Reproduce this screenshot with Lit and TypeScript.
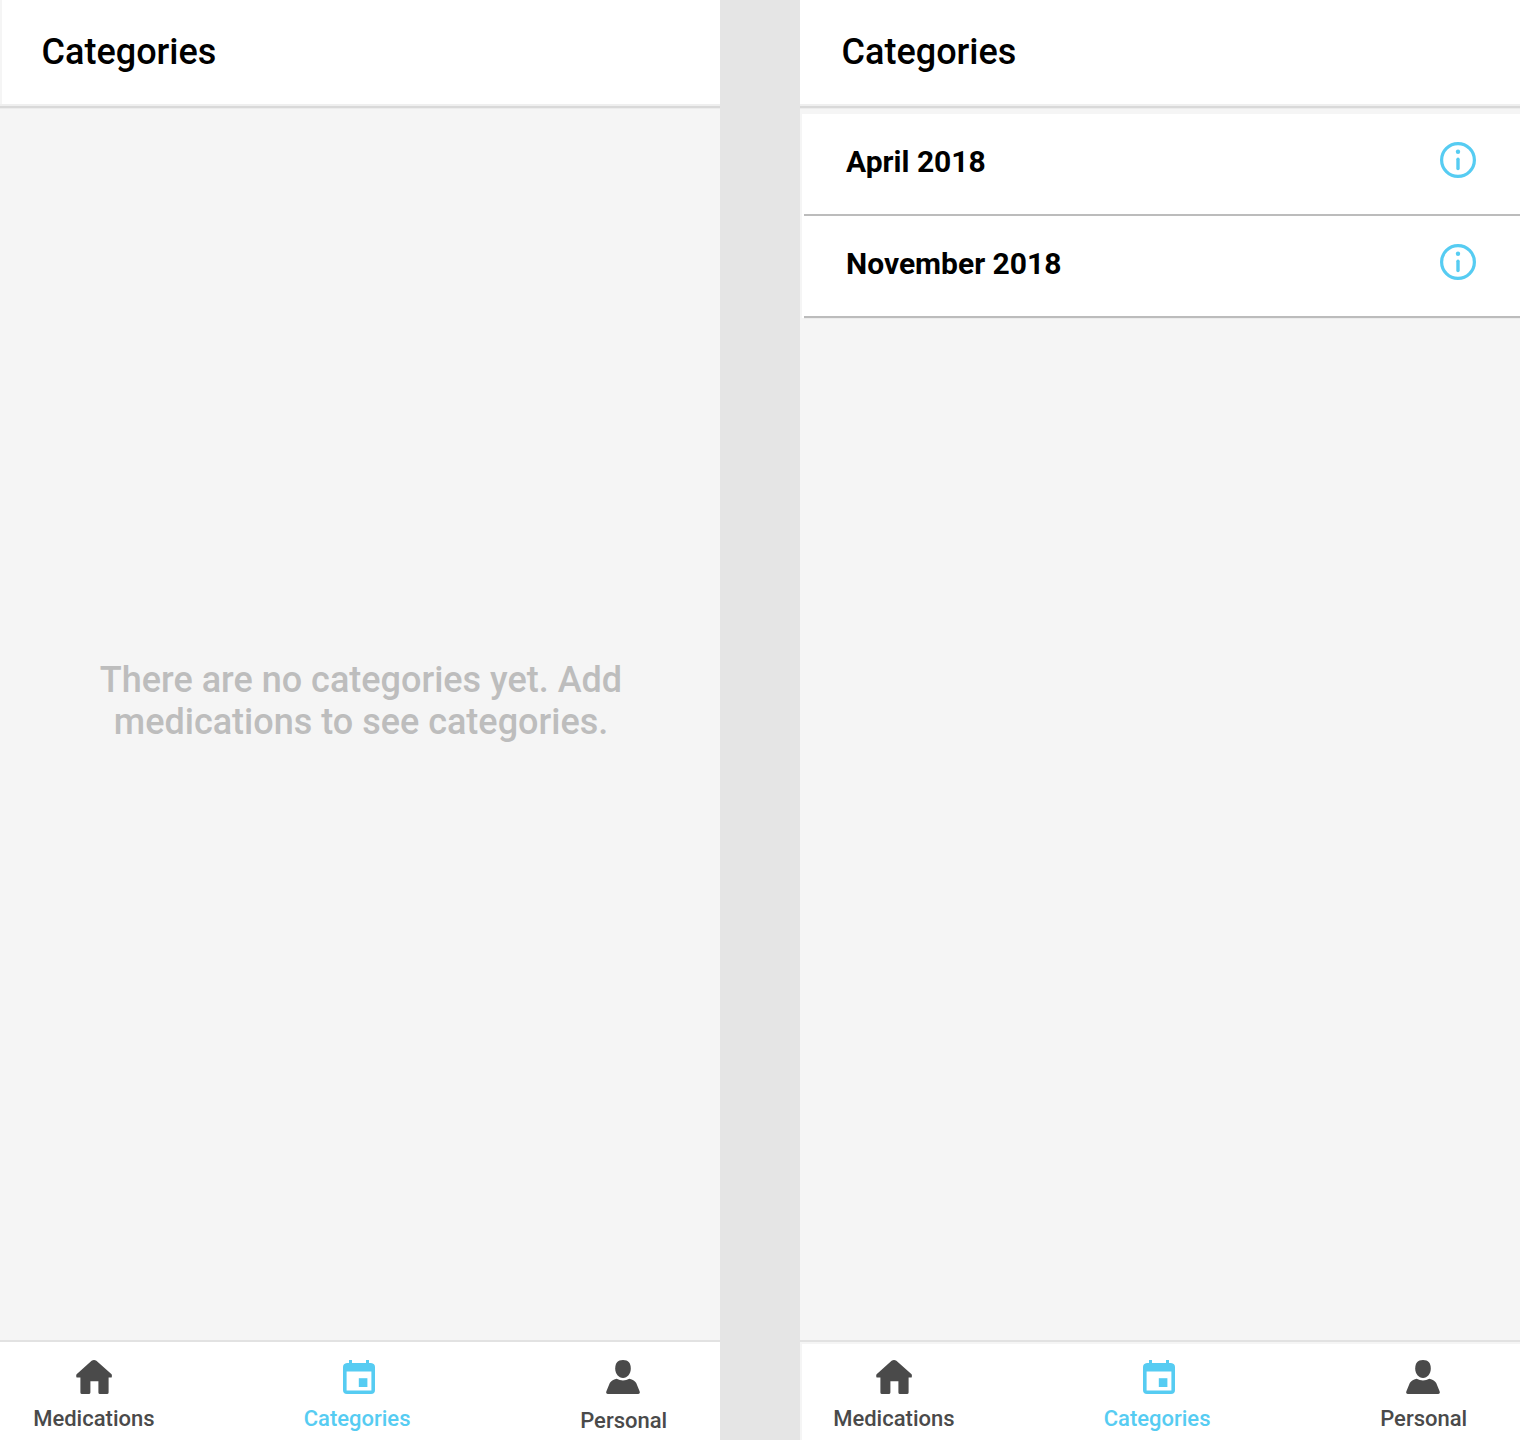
import { LitElement, html, css, svg } from "lit";
import { customElement, property } from "lit/decorators.js";

const homeIcon = svg`<svg class="icon" width="36" height="34" viewBox="0 0 36 34">
  <path d="M15.6 .8Q18 -.6 20.4 .8L35.6 14.2Q36.2 15.6 35.6 17.6H32.6V32.4Q32.6 34 31 34H24Q22.4 34 22.4 32.4V21.2H14.4V32.4Q14.4 34 12.8 34H6Q4.4 34 4.4 32.4V17.6H.6Q-.2 15.6 .6 14.2Z"/>
</svg>`;

const calendarIcon = svg`<svg class="icon" width="32" height="34" viewBox="0 0 32 34">
  <path fill-rule="evenodd" d="M6 0H9V3H23V0H26V3H28Q32 3.4 32 7V30Q32 34 28 34H4Q0 34 0 30V7Q0 3.4 4 3H6ZM3.6 11.6V30.6H28.4V11.6Z"/>
  <rect x="15.8" y="18.2" width="8.6" height="8.8"/>
</svg>`;

const personIcon = svg`<svg class="icon" width="34" height="34" viewBox="0 0 34 34">
  <path d="M17 0C22.4 0 24.8 3.2 24.8 8.6C24.8 13.8 21.4 18 17 18C12.6 18 9.2 13.8 9.2 8.6C9.2 3.2 11.6 0 17 0Z"/>
  <path d="M10.6 18.8Q17 22 23.4 18.8Q28.6 20.2 30.2 23L33.6 31.2Q34.5 34 32.2 34H1.8Q-.5 34 .4 31.2L3.8 23Q5.4 20.2 10.6 18.8Z"/>
</svg>`;

const infoIcon = svg`<svg class="info" width="36" height="36" viewBox="0 0 36 36">
  <circle cx="18" cy="18" r="16.4" fill="none" stroke="currentColor" stroke-width="3.2"/>
  <circle cx="18" cy="9.8" r="2.2" fill="currentColor"/>
  <path d="M18 17.2V26.6" stroke="currentColor" stroke-width="3.4" stroke-linecap="round"/>
</svg>`;

@customElement("tab-bar")
export class TabBar extends LitElement {
  static styles = css`
    :host { display: block; }
    .bar {
      display: flex;
      justify-content: space-between;
      box-sizing: border-box;
      height: 100px;
      padding: 18px 52.8px 0 33.2px;
      border-top: 2px solid #e2e2e2;
      background: #fff;
      color: #4a4a4a;
    }
    :host([inset]) .bar {
      box-shadow: inset 2px 2px #f5f5f5;
    }
    .tab {
      display: flex;
      flex-direction: column;
      align-items: center;
      font-size: 22px;
      line-height: 26px;
      font-weight: 500;
      white-space: nowrap;
    }
    .icon { display: block; fill: currentColor; margin-bottom: 12px; }
    .active { color: #56ccf2; }
    .active .icon { margin-left: 4.6px; }
    .middle { margin-right: 20.6px; }
    .personal .icon { margin-right: 2px; }
    :host(:not([inset])) .personal .icon { margin-bottom: 14px; }
  `;
  render() {
    return html`<nav class="bar">
      <div class="tab">${homeIcon}<span>Medications</span></div>
      <div class="tab active middle">${calendarIcon}<span>Categories</span></div>
      <div class="tab personal">${personIcon}<span>Personal</span></div>
    </nav>`;
  }
}

@customElement("category-screen")
export class CategoryScreen extends LitElement {
  @property({ attribute: false }) items: string[] = [];
  static styles = css`
    :host {
      display: flex;
      flex-direction: column;
      width: 720px;
      height: 1440px;
      background: #f5f5f5;
    }
    .header {
      height: 104px;
      box-sizing: border-box;
      padding: 31px 42px 0 41.6px;
      background: #fff;
      font-size: 36px;
      line-height: 42px;
      font-weight: 500;
      color: #000;
    }
    .header.indented { margin-left: 2px; padding-left: 39.6px; }
    .edge {
      height: 5px;
      background: linear-gradient(#efefef 2px, #d9d9d9 2px 4px, #ececec 4px);
    }
    .empty {
      flex: 1;
      display: flex;
      align-items: center;
      justify-content: center;
      padding: 0 0 47px 2px;
      color: #bdbdbd;
      font-size: 36px;
      line-height: 42px;
      font-weight: 500;
      text-align: center;
    }
    .message { width: 560px; }
    .list { flex: 1; padding: 5px 0 0 2px; }
    .row {
      display: flex;
      justify-content: space-between;
      align-items: flex-start;
      box-sizing: border-box;
      height: 102px;
      padding: 28px 44px 0 44px;
      background: linear-gradient(#bcbcbc, #bcbcbc) 2px 100% / 100% 2px no-repeat, #fff;
      color: #000;
      font-size: 30px;
      line-height: 40px;
      font-weight: 700;
    }
    .row:last-child { box-shadow: 2px 1px #ececec; }
    .info { display: block; color: #56ccf2; }
  `;
  render() {
    const filled = this.items.length > 0;
    return html`
      <div class="header ${filled ? "" : "indented"}">Categories</div>
      <div class="edge"></div>
      ${filled
        ? html`<div class="list">
            ${this.items.map((name) => html`<div class="row"><span>${name}</span>${infoIcon}</div>`)}
          </div>`
        : html`<div class="empty"><div class="message">There are no categories yet. Add<br />medications to see categories.</div></div>`}
      <tab-bar ?inset=${filled}></tab-bar>
    `;
  }
}

@customElement("app-root")
export class AppRoot extends LitElement {
  static styles = css`
    :host {
      display: flex;
      gap: 80px;
      width: 1520px;
      height: 1440px;
      overflow: hidden;
      background: #e5e5e5;
      font-family: Roboto, sans-serif;
    }
  `;
  render() {
    return html`
      <category-screen></category-screen>
      <category-screen .items=${["April 2018", "November 2018"]}></category-screen>
    `;
  }
}
